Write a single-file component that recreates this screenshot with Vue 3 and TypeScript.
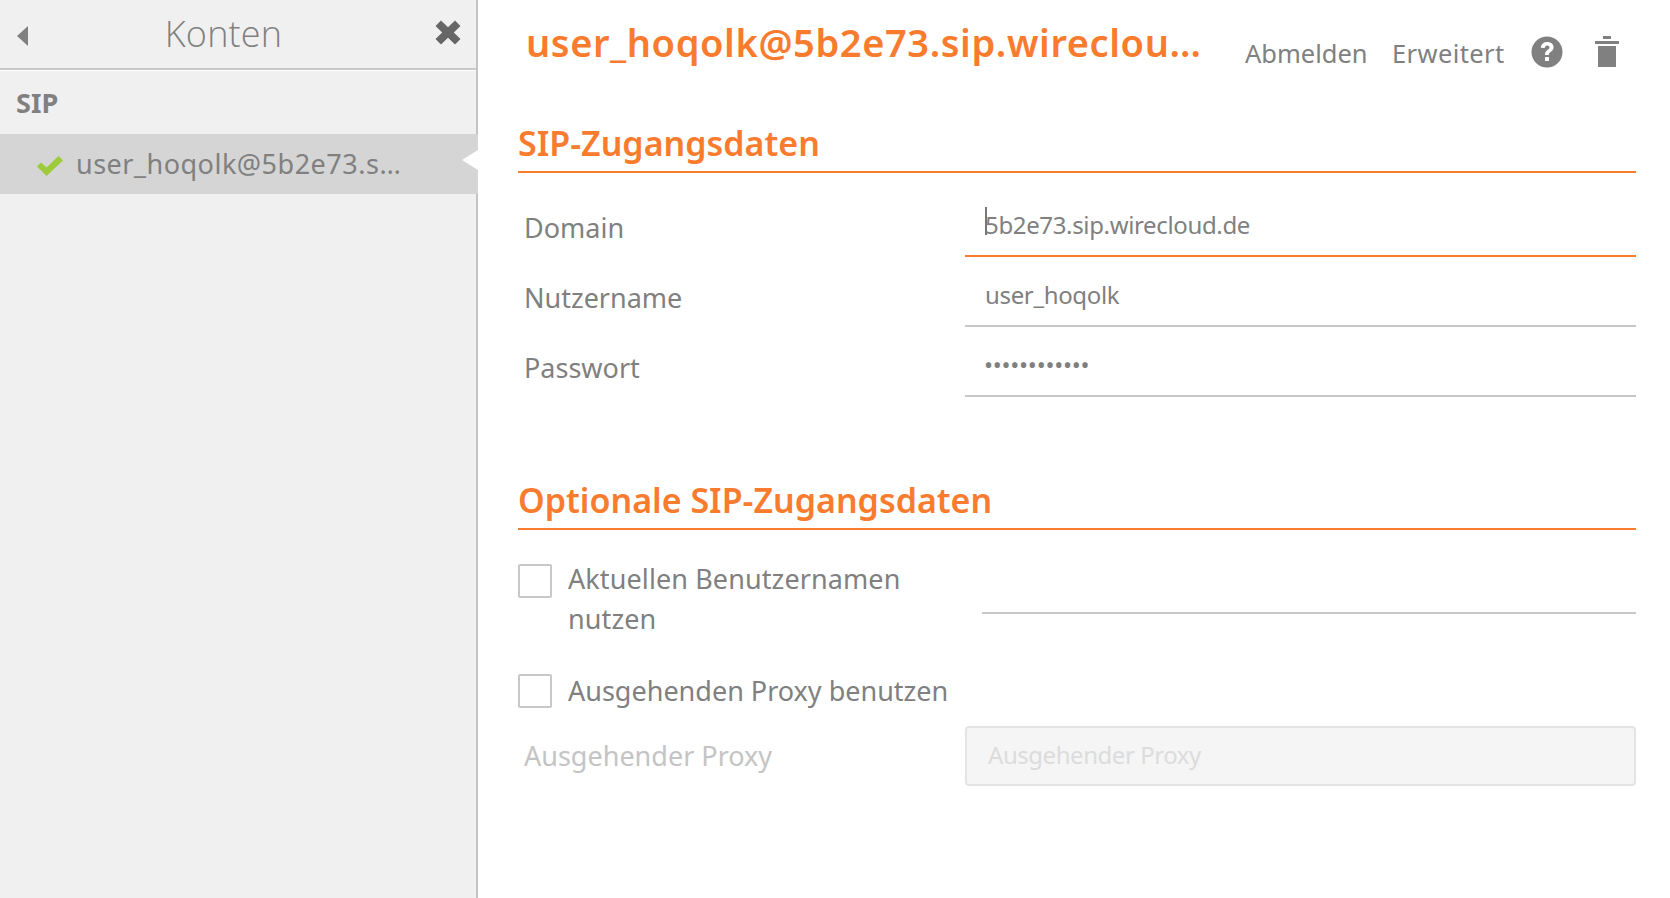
<script setup lang="ts">
const account = 'user_hoqolk@5b2e73.sip.wirecloud.de'
</script>

<template>
  <div class="app">
    <aside class="sidebar">
      <header class="side-head">
        <svg class="back" viewBox="0 0 11 20" width="11" height="20"><path d="M11 0V20L0 10Z" fill="#808080" /></svg>
        <h2 class="side-title">Konten</h2>
        <svg class="close" viewBox="0 0 26 25" width="26" height="25"><path d="M0.500 6 6 0.500 13 7.300 20 0.500 25.500 6 18.800 12.500 25.500 19 20 24.500 13 17.700 6 24.500 0.500 19 7.200 12.500Z" fill="#666" /></svg>
      </header>
      <div class="group">SIP</div>
      <div class="account">
        <svg class="check" viewBox="0 0 26 20" width="26" height="20"><path d="M0 10.500 4 6.500 9.500 11.500 21.500 0 26 4.500 9.500 20Z" fill="#9dcb3b" /></svg>
        <span class="account-name">{{ account }}</span>
        <span class="pointer"></span>
      </div>
    </aside>

    <main class="main">
      <header class="top">
        <h1 class="title">{{ account }}</h1>
        <a class="link abmelden">Abmelden</a>
        <a class="link erweitert">Erweitert</a>
        <svg class="help" viewBox="0 0 32 32" width="32" height="32">
          <circle cx="16" cy="16" r="15.500" fill="#808080" />
          <path d="M9.800 11.800C10.200 8 12.800 6 16.300 6 20 6 22.600 8.200 22.600 11.300 22.600 13.500 21.400 14.800 19.600 16 18.200 17 17.900 17.500 17.900 19H14C14 16.500 14.700 15.200 16.500 14 17.900 13 18.500 12.500 18.500 11.500 18.500 10.400 17.600 9.600 16.300 9.600 14.800 9.600 13.900 10.500 13.700 12.100ZM14 21H18V25H14Z" fill="#fff" />
        </svg>
        <svg class="trash" viewBox="0 0 24 31" width="24" height="31">
          <path d="M8 0H16V3H8ZM0 5H24V8H0ZM3 10H21V31H3Z" fill="#808080" />
        </svg>
      </header>

      <section class="creds">
        <h3 class="section-title">SIP-Zugangsdaten</h3>
        <div class="row">
          <label class="row-label">Domain</label>
          <div class="field focused">
            <input class="input" type="text" value="5b2e73.sip.wirecloud.de" readonly />
            <span class="caret"></span>
          </div>
        </div>
        <div class="row">
          <label class="row-label">Nutzername</label>
          <div class="field"><input class="input" type="text" value="user_hoqolk" readonly /></div>
        </div>
        <div class="row">
          <label class="row-label">Passwort</label>
          <div class="field"><div class="dots">••••••••••••</div></div>
        </div>
      </section>

      <section class="optional">
        <h3 class="section-title">Optionale SIP-Zugangsdaten</h3>
        <div class="check-row first">
          <span class="box"></span>
          <span class="check-label">Aktuellen Benutzernamen<br />nutzen</span>
          <div class="user-line"></div>
        </div>
        <div class="check-row second">
          <span class="box"></span>
          <span class="check-label">Ausgehenden Proxy benutzen</span>
        </div>
        <div class="proxy-row">
          <label class="row-label disabled">Ausgehender Proxy</label>
          <input class="proxy-input" type="text" placeholder="Ausgehender Proxy" disabled />
        </div>
      </section>
    </main>
  </div>
</template>

<style scoped>
.app {
  display: flex;
  width: 1670px;
  height: 898px;
  overflow: hidden;
  background: #fff;
  color: #808080;
  font-family: "Noto Sans", "Open Sans", sans-serif;
}
.sidebar {
  flex: none;
  width: 476px;
  background: #f0f0f0;
  border-right: 2px solid #c4c4c4;
  box-shadow: 1px 0 0 #fff;
}
.side-head {
  display: flex;
  align-items: center;
  justify-content: space-between;
  height: 70px;
  padding: 0 15px 0 17px;
  box-sizing: border-box;
  border-bottom: 2px solid #c8c8c8;
  box-shadow: 0 1px 0 #fff;
}
.back { margin-top: 4px; }
.close { margin-top: -3px; }
.side-title {
  margin: 0 16px 2px 0;
  font-size: 36px;
  font-weight: 300;
  letter-spacing: 0.200px;
  font-family: "Open Sans", sans-serif;
  color: #808080;
}
.group {
  height: 64px;
  line-height: 66px;
  padding-left: 16px;
  font-size: 27px;
  font-weight: 700;
}
.account {
  position: relative;
  display: flex;
  align-items: center;
  box-sizing: border-box;
  height: 60px;
  width: 478px;
  padding-left: 37px;
  background: #d5d5d5;
}
.check { flex: none; margin-top: 4px; }
.account-name {
  width: 328px;
  margin-left: 13px;
  overflow: hidden;
  white-space: nowrap;
  text-overflow: ellipsis;
  font-size: 27px;
  letter-spacing: 0.500px;
  line-height: 52px;
  height: 52px;
}
.pointer {
  position: absolute;
  right: 0;
  top: 16px;
  border-style: solid;
  border-width: 10px 16px 10px 0;
  border-color: transparent #fff transparent transparent;
}
.main {
  flex: 1;
  min-width: 0;
  padding: 0 34px 0 40px;
}
.top {
  display: flex;
  align-items: flex-start;
  height: 118px;
}
.title {
  flex: none;
  width: 680px;
  margin: 18px 0 0 8px;
  overflow: hidden;
  white-space: nowrap;
  text-overflow: ellipsis;
  font-size: 38px;
  line-height: 48px;
  font-weight: 600;
  letter-spacing: 0.600px;
  color: #f97b2e;
}
.link {
  font-size: 25.500px;
  line-height: 36px;
  margin-top: 35px;
  color: #808080;
}
.abmelden { margin-left: 39px; width: 147px; }
.erweitert { width: 139px; letter-spacing: 0.400px; }
.help { flex: none; margin-top: 36px; }
.trash { flex: none; margin-top: 36px; margin-left: 32px; }
.section-title {
  margin: 0;
  height: 55px;
  border-bottom: 2px solid #f97b2e;
  font-size: 34px;
  line-height: 50px;
  font-weight: 600;
  color: #f97b2e;
  box-sizing: border-box;
}
.creds .section-title { margin-bottom: 14px; }
.row {
  display: flex;
  height: 70px;
}
.row-label {
  flex: none;
  width: 447px;
  padding: 6px 0 0 6px;
  box-sizing: border-box;
  font-size: 27px;
  line-height: 70px;
}
.row-label.disabled { color: #c4c4c4; padding-top: 0; }
.field {
  position: relative;
  flex: 1;
  height: 70px;
  box-sizing: border-box;
  border-bottom: 2px solid #c8c8c8;
}
.field.focused { border-bottom-color: #f97b2e; }
.input {
  display: block;
  width: 100%;
  height: 62px;
  margin-top: 6px;
  padding: 0 0 0 20px;
  box-sizing: border-box;
  border: 0;
  outline: 0;
  background: transparent;
  font: inherit;
  font-size: 24px;
  letter-spacing: -0.350px;
  color: #808080;
}
.dots {
  padding: 8px 0 0 19px;
  line-height: 60px;
  font-size: 24px;
  letter-spacing: -0.250px;
  color: #808080;
}
.caret {
  position: absolute;
  left: 20px;
  top: 20px;
  width: 2px;
  height: 28px;
  background: #777;
}
.optional { margin-top: 78px; }
.check-row {
  position: relative;
  display: flex;
  align-items: flex-start;
}
.check-row.first { margin-top: 34px; height: 110px; }
.check-row.second { height: 52px; }
.box {
  flex: none;
  width: 34px;
  height: 34px;
  box-sizing: border-box;
  border: 2px solid #c8c8c8;
  border-radius: 2px;
  background: #fff;
}
.check-label {
  margin-left: 16px;
  font-size: 27px;
  line-height: 40px;
  margin-top: -5px;
}
.first .check-label { letter-spacing: 0.100px; }
.second .check-label { margin-top: -3px; }
.user-line {
  position: absolute;
  left: 464px;
  right: 0;
  top: 48px;
  height: 2px;
  background: #c8c8c8;
}
.proxy-row {
  display: flex;
  align-items: center;
  height: 60px;
}
.proxy-input {
  flex: 1;
  min-width: 0;
  height: 60px;
  box-sizing: border-box;
  padding: 0 0 3px 21px;
  border: 2px solid #e4e4e4;
  border-radius: 4px;
  background: #f5f5f5;
  font: inherit;
  font-size: 24px;
  letter-spacing: -0.450px;
  outline: 0;
}
.proxy-input::placeholder { color: #dcdcdc; opacity: 1; }
.proxy-row .row-label { line-height: 60px; }
</style>
